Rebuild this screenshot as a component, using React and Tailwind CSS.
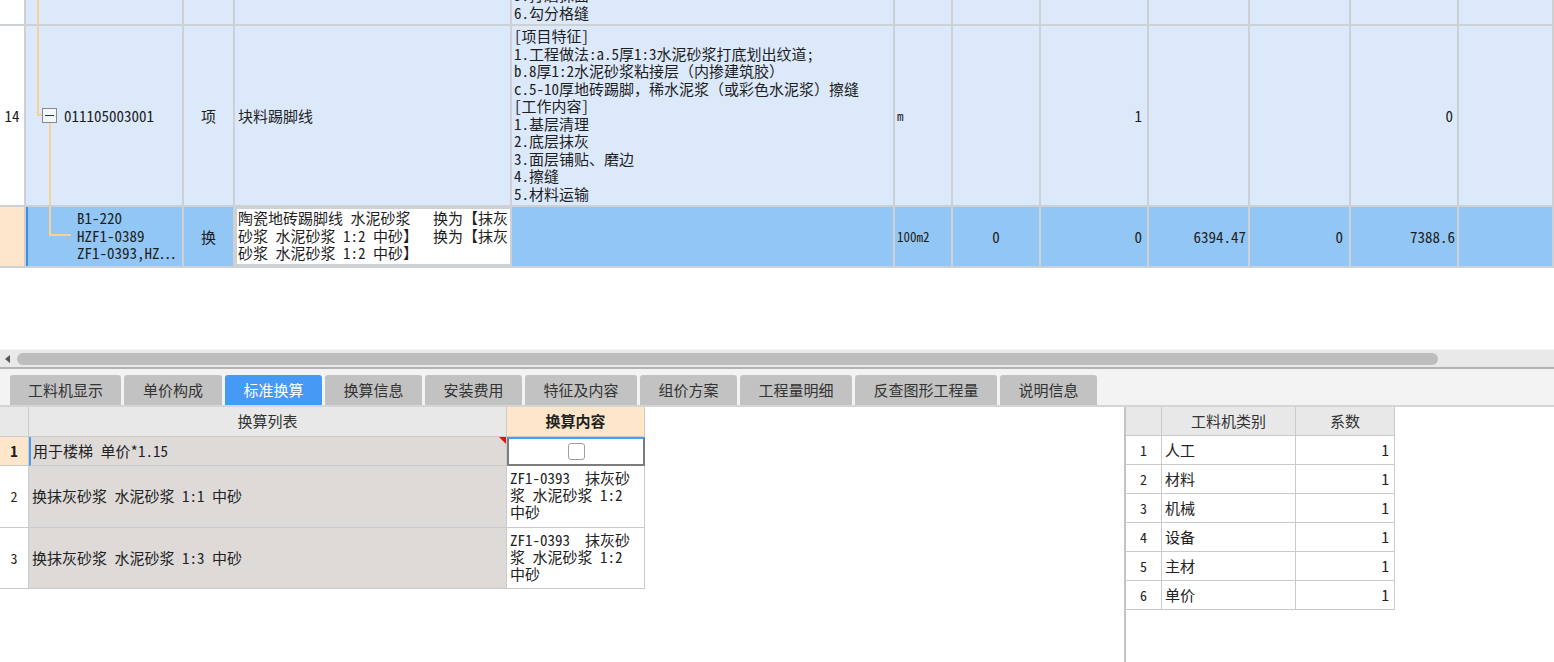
import React from "react";

const mono = "font-[family-name:'Noto_Sans_Mono_CJK_SC','Noto_Sans_CJK_SC',monospace]";
const sans = "font-[family-name:'Noto_Sans_CJK_SC','Noto_Sans',sans-serif]";

const topCols =
  "grid grid-cols-[26px_158px_51px_277px_383px_58px_88px_108px_101px_101px_108px_95px]";
const cell = "relative h-full overflow-hidden border-r-2 border-[#cdd1d6]";
const tree = "absolute bg-[#f7d19c]";

const features = [
  "[项目特征]",
  "1.工程做法:a.5厚1:3水泥砂浆打底划出纹道;",
  "b.8厚1:2水泥砂浆粘接层（内掺建筑胶）",
  "c.5-10厚地砖踢脚，稀水泥浆（或彩色水泥浆）擦缝",
  "[工作内容]",
  "1.基层清理",
  "2.底层抹灰",
  "3.面层铺贴、磨边",
  "4.擦缝",
  "5.材料运输",
];

const tabs = [
  { label: "工料机显示", w: "w-[111px]" },
  { label: "单价构成", w: "w-[98px]" },
  { label: "标准换算", w: "w-[97px]", active: true },
  { label: "换算信息", w: "w-[97px]" },
  { label: "安装费用", w: "w-[97px]" },
  { label: "特征及内容", w: "w-[112px]" },
  { label: "组价方案", w: "w-[97px]" },
  { label: "工程量明细", w: "w-[112px]" },
  { label: "反查图形工程量", w: "w-[142px]" },
  { label: "说明信息", w: "w-[97px]" },
];

const coefs = ["人工", "材料", "机械", "设备", "主材", "单价"];

function Lines({ items }) {
  return items.map((t, i) => (
    <div key={i} className="whitespace-pre">
      {t}
    </div>
  ));
}

function TopTable() {
  return (
    <div className={`h-[349px] bg-white text-[15px] leading-[17.5px] text-[#1e1e1e] ${mono}`}>
      {/* partial row above */}
      <div className={`${topCols} h-[26px] border-b-2 border-[#cdd1d6] bg-[#dce9fb]`}>
        <div className={`${cell} bg-white`} />
        <div className={cell}>
          <div className={`${tree} left-[11px] top-0 bottom-0 w-[2px]`} />
        </div>
        <div className={cell} />
        <div className={cell} />
        <div className={`${cell} flex flex-col justify-end pl-[2px] pb-[3px]`}>
          <Lines items={["4.刮腻子", "5.打磨抹面", "6.勾分格缝"]} />
        </div>
        <div className={cell} />
        <div className={cell} />
        <div className={cell} />
        <div className={cell} />
        <div className={cell} />
        <div className={cell} />
        <div className={cell} />
      </div>

      {/* row 14 */}
      <div className={`${topCols} h-[181px] border-b-2 border-[#cdd1d6] bg-[#dce9fb]`}>
        <div className={`${cell} flex items-center justify-center bg-white`}>14</div>
        <div className={`${cell} flex items-center pl-[38px]`}>
          <div className={`${tree} left-[11px] top-0 h-[89px] w-[2px]`} />
          <div className={`${tree} left-[11px] top-[88px] h-[2px] w-[6px]`} />
          <div className="absolute left-[16px] top-[82px] flex h-[15px] w-[15px] items-center justify-center border border-[#8a8a8a] bg-[#f3f6fa]">
            <div className="h-[1px] w-[9px] bg-[#333]" />
          </div>
          <div className={`${tree} left-[23px] top-[97px] bottom-0 w-[2px]`} />
          011105003001
        </div>
        <div className={`${cell} flex items-center justify-center`}>项</div>
        <div className={`${cell} flex items-center pl-[3px]`}>块料踢脚线</div>
        <div className={`${cell} pl-[2px] pt-[1px]`}>
          <Lines items={features} />
        </div>
        <div className={`${cell} flex items-center pl-[2px] text-[13px]`}>m</div>
        <div className={cell} />
        <div className={`${cell} flex items-center justify-end pr-[5px]`}>1</div>
        <div className={cell} />
        <div className={cell} />
        <div className={`${cell} flex items-center justify-end pr-[4px]`}>0</div>
        <div className={cell} />
      </div>

      {/* selected row */}
      <div className={`${topCols} h-[61px] border-b-2 border-[#cdd1d6] bg-[#92c6f4]`}>
        <div className={`${cell} bg-[#fde6c9]`} />
        <div className={`${cell} border-l-2 border-l-[#3d8fe6] pl-[49px] pt-[2px]`}>
          <div className={`${tree} left-[21px] top-0 h-[29px] w-[2px]`} />
          <div className={`${tree} left-[21px] top-[27px] h-[2px] w-[22px]`} />
          <Lines items={["B1-220", "HZF1-0389", "ZF1-0393,HZ⋯"]} />
        </div>
        <div className={`${cell} flex items-center justify-center`}>换</div>
        <div className={`${cell} border-2 border-[#3c92ee] bg-white pl-[1px]`}>
          <Lines
            items={[
              "陶瓷地砖踢脚线 水泥砂浆   换为【抹灰",
              "砂浆 水泥砂浆 1:2 中砂】  换为【抹灰",
              "砂浆 水泥砂浆 1:2 中砂】",
            ]}
          />
        </div>
        <div className={cell} />
        <div className={`${cell} flex items-center pl-[2px] text-[13px]`}>100m2</div>
        <div className={`${cell} flex items-center justify-center`}>0</div>
        <div className={`${cell} flex items-center justify-end pr-[5px]`}>0</div>
        <div className={`${cell} flex items-center justify-end pr-[2px]`}>6394.47</div>
        <div className={`${cell} flex items-center justify-end pr-[6px]`}>0</div>
        <div className={`${cell} flex items-center justify-end pr-[2px]`}>7388.6</div>
        <div className={cell} />
      </div>
    </div>
  );
}

function Tabs() {
  return (
    <>
      <div className="flex h-[18px] items-center border-t border-[#f5f5f5] bg-[#e9e9e9]">
        <div className="flex w-[17px] pl-[5px]">
          <div className="h-0 w-0 border-y-[4px] border-r-[5px] border-y-transparent border-r-[#555]" />
        </div>
        <div className="h-[12px] w-[1421px] rounded-full bg-[#bdbdbd]" />
      </div>
      <div className="h-[2px] bg-[#b3b3b3]" />
      <div className={`flex h-[36px] items-end gap-[3px] bg-[#f3f3f3] pl-[10px] ${sans}`}>
        {tabs.map((t) => (
          <div
            key={t.label}
            className={`flex h-[30px] items-center justify-center rounded-t-[3px] text-[15px] ${t.w} ${
              t.active ? "bg-[#4699f4] text-white" : "bg-[#c2c2c2] text-[#333]"
            }`}
          >
            {t.label}
          </div>
        ))}
      </div>
      <div className="h-[2px] bg-[#d5d5d5]" />
    </>
  );
}

function SwapTable() {
  const b = "border-r border-b border-[#cbcbcb]";
  const content = ["ZF1-0393  抹灰砂", "浆 水泥砂浆 1:2", "中砂"];
  return (
    <div className={`grid w-[645px] grid-cols-[29px_478px_138px] text-[15px] text-[#222] ${mono}`}>
      <div className={`${b} h-[30px] bg-[#e8e8e8]`} />
      <div className={`${b} flex h-[30px] items-center justify-center bg-[#e8e8e8] text-[#333] ${sans}`}>换算列表</div>
      <div className={`${b} flex h-[30px] items-center justify-center bg-[#fde6c9] font-bold ${sans}`}>换算内容</div>

      <div className={`${b} flex h-[29px] items-center justify-center bg-[#fde6c9] font-bold`}>1</div>
      <div className={`${b} relative flex h-[29px] items-center border-l-2 border-l-[#4a9cf3] bg-[#dedad8] pl-[2px]`}>
        用于楼梯 单价*1.15
        <div className="absolute right-0 top-0 h-0 w-0 border-l-[7px] border-t-[7px] border-l-transparent border-t-[#e81010]" />
      </div>
      <div className="flex h-[29px] items-center justify-center border-2 border-[#7d7d7d] border-t-[#4a9ff5] bg-white">
        <div className="h-[17px] w-[17px] rounded-[3px] border border-[#9e9e9e] bg-white" />
      </div>

      {[
        ["2", "换抹灰砂浆 水泥砂浆 1:1 中砂", "h-[62px]"],
        ["3", "换抹灰砂浆 水泥砂浆 1:3 中砂", "h-[61px]"],
      ].map(([n, label, h]) => (
        <React.Fragment key={n}>
          <div className={`${b} ${h} flex items-center justify-center bg-white text-[14px]`}>{n}</div>
          <div className={`${b} ${h} flex items-center bg-[#dedad8] pl-[3px] whitespace-pre`}>{label}</div>
          <div className={`${b} ${h} bg-white pl-[3px] pt-[3px] leading-[17px]`}>
            <Lines items={content} />
          </div>
        </React.Fragment>
      ))}
    </div>
  );
}

function CoefTable() {
  const b = "border-r border-b border-[#cbcbcb]";
  return (
    <div className={`grid w-[269px] grid-cols-[36px_134px_99px] text-[15px] text-[#222] ${mono}`}>
      <div className={`${b} h-[29px] bg-[#e8e8e8]`} />
      <div className={`${b} flex h-[29px] items-center justify-center bg-[#e8e8e8] text-[#333] ${sans}`}>工料机类别</div>
      <div className={`${b} flex h-[29px] items-center justify-center bg-[#e8e8e8] text-[#333] ${sans}`}>系数</div>
      {coefs.map((c, i) => (
        <React.Fragment key={c}>
          <div className={`${b} flex h-[29px] items-center justify-center text-[14px]`}>{i + 1}</div>
          <div className={`${b} flex h-[29px] items-center pl-[3px]`}>{c}</div>
          <div className={`${b} flex h-[29px] items-center justify-end pr-[5px]`}>1</div>
        </React.Fragment>
      ))}
    </div>
  );
}

export default function App() {
  return (
    <div className="flex h-[662px] w-[1554px] flex-col overflow-hidden bg-white">
      <TopTable />
      <Tabs />
      <div className="flex h-[255px] bg-white">
        <div className="w-[1124px]">
          <SwapTable />
        </div>
        <div className="w-[2px] bg-[#c3c3c3]" />
        <div className="flex-1">
          <CoefTable />
        </div>
      </div>
    </div>
  );
}
